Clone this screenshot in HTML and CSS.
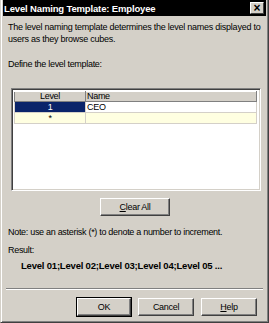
FILE: index.html
```html
<!DOCTYPE html>
<html>
<head>
    <title>Level Naming Template</title>
    <link rel="stylesheet" href="styles.css">
</head>
<body>
    <div class="window">
        <div class="titlebar">
            <span class="title">Level Naming Template: Employee</span>
            <span class="close">&#215;</span>
        </div>
        <div class="content">
            <p class="intro">The level naming template determines the level names displayed to users as they browse cubes.</p>
            <p class="define">Define the level template:</p>
            <div class="grid">
                <table>
                    <tr><th class="col-level">Level</th><th class="col-name">Name</th></tr>
                    <tr><td class="level selected">1</td><td class="name">CEO</td></tr>
                    <tr class="new-row"><td class="level">*</td><td class="name"></td></tr>
                </table>
            </div>
            <div class="clear-row">
                <button class="btn btn-clear"><u>C</u>lear All</button>
            </div>
            <p class="note">Note: use an asterisk (*) to denote a number to increment.</p>
            <p class="result-label">Result:</p>
            <p class="result">Level 01;Level 02;Level 03;Level 04;Level 05 ...</p>
        </div>
        <div class="separator"></div>
        <div class="buttons">
            <button class="btn btn-default">OK</button>
            <button class="btn">Cancel</button>
            <button class="btn"><u>H</u>elp</button>
        </div>
    </div>
</body>
</html>
```

FILE: styles.css
```css
body {
    margin: 0;
    overflow: hidden;
    background-color: #d4d0c8;
    font-family: "Liberation Sans", Arial, sans-serif;
    font-size: 9px;
    letter-spacing: -0.3px;
    color: #000;
}
.window {
    width: 269px;
    height: 323px;
    box-sizing: border-box;
    background-color: #d4d0c8;
    border-left: 1px solid #d4d0c8;
    border-right: 1px solid #404040;
    border-bottom: 1px solid #404040;
    box-shadow: inset 1px 0 0 #fff, inset -1px -1px 0 #808080;
    padding: 0 2px 2px 2px;
    display: flex;
    flex-direction: column;
}
.titlebar {
    height: 16px;
    flex-shrink: 0;
    background-color: #000;
    color: #fff;
    display: flex;
    align-items: center;
    justify-content: space-between;
    padding: 0 2px 0 1px;
}
.title {
    font-weight: bold;
    font-size: 9.5px;
    letter-spacing: -0.15px;
}
.close {
    width: 14px;
    height: 12px;
    box-sizing: border-box;
    background-color: #d4d0c8;
    color: #000;
    font-weight: bold;
    font-size: 12px;
    line-height: 10px;
    letter-spacing: 0;
    text-align: center;
    border: 1px solid #fff;
    border-right-color: #404040;
    border-bottom-color: #404040;
}
.content {
    padding: 5px 4px 0 5px;
    flex: 1;
}
p {
    margin: 0;
    white-space: nowrap;
    line-height: 12px;
}
.intro {
    white-space: normal;
    letter-spacing: -0.25px;
}
.define {
    margin-top: 13px;
}
.grid {
    margin: 18px 1px 0 3px;
    height: 103px;
    box-sizing: border-box;
    background-color: #fff;
    border: 1px solid #808080;
    border-right-color: #fff;
    border-bottom-color: #fff;
    box-shadow: inset 1px 1px 0 #404040, inset -1px -1px 0 #d4d0c8;
    padding: 2px 3px 2px 2px;
}
table {
    width: 100%;
    border-collapse: collapse;
    font-size: 9px;
}
th {
    font-weight: normal;
    background-color: #d4d0c8;
    height: 9px;
    padding: 0 1px;
    border: 1px solid #808080;
    border-top-color: #fff;
    line-height: 9px;
}
.col-level {
    width: 68px;
    text-align: center;
}
.col-name {
    text-align: left;
}
td {
    height: 10px;
    padding: 0 1px;
    line-height: 10px;
    border: 1px solid #d4d0c8;
}
.level {
    text-align: center;
}
.selected {
    background-color: #0a246a;
    color: #fff;
}
.new-row td {
    background-color: #ffffe1;
}
.clear-row {
    display: flex;
    justify-content: center;
    margin-top: 7px;
}
.btn {
    font-family: "Liberation Sans", Arial, sans-serif;
    font-size: 9px;
    letter-spacing: -0.3px;
    background-color: #d4d0c8;
    border: 1px solid #fff;
    border-right-color: #404040;
    border-bottom-color: #404040;
    box-shadow: inset -1px -1px 0 #808080;
    height: 18px;
    width: 56px;
    padding: 0;
    color: #000;
}
.btn-clear {
    width: 70px;
}
.btn-default {
    width: 54px;
    outline: 1px solid #000;
}
.note {
    margin-top: 10px;
}
.result-label {
    margin-top: 6px;
}
.result {
    margin-top: 4px;
    padding-left: 13px;
    font-weight: bold;
    font-size: 9.5px;
    letter-spacing: -0.2px;
}
.separator {
    flex-shrink: 0;
    height: 0;
    margin: 0 3px;
    border-top: 1px solid #808080;
    border-bottom: 1px solid #fff;
}
.buttons {
    flex-shrink: 0;
    display: flex;
    justify-content: flex-end;
    gap: 7px;
    padding: 8px 9px 4px 0;
}
```
